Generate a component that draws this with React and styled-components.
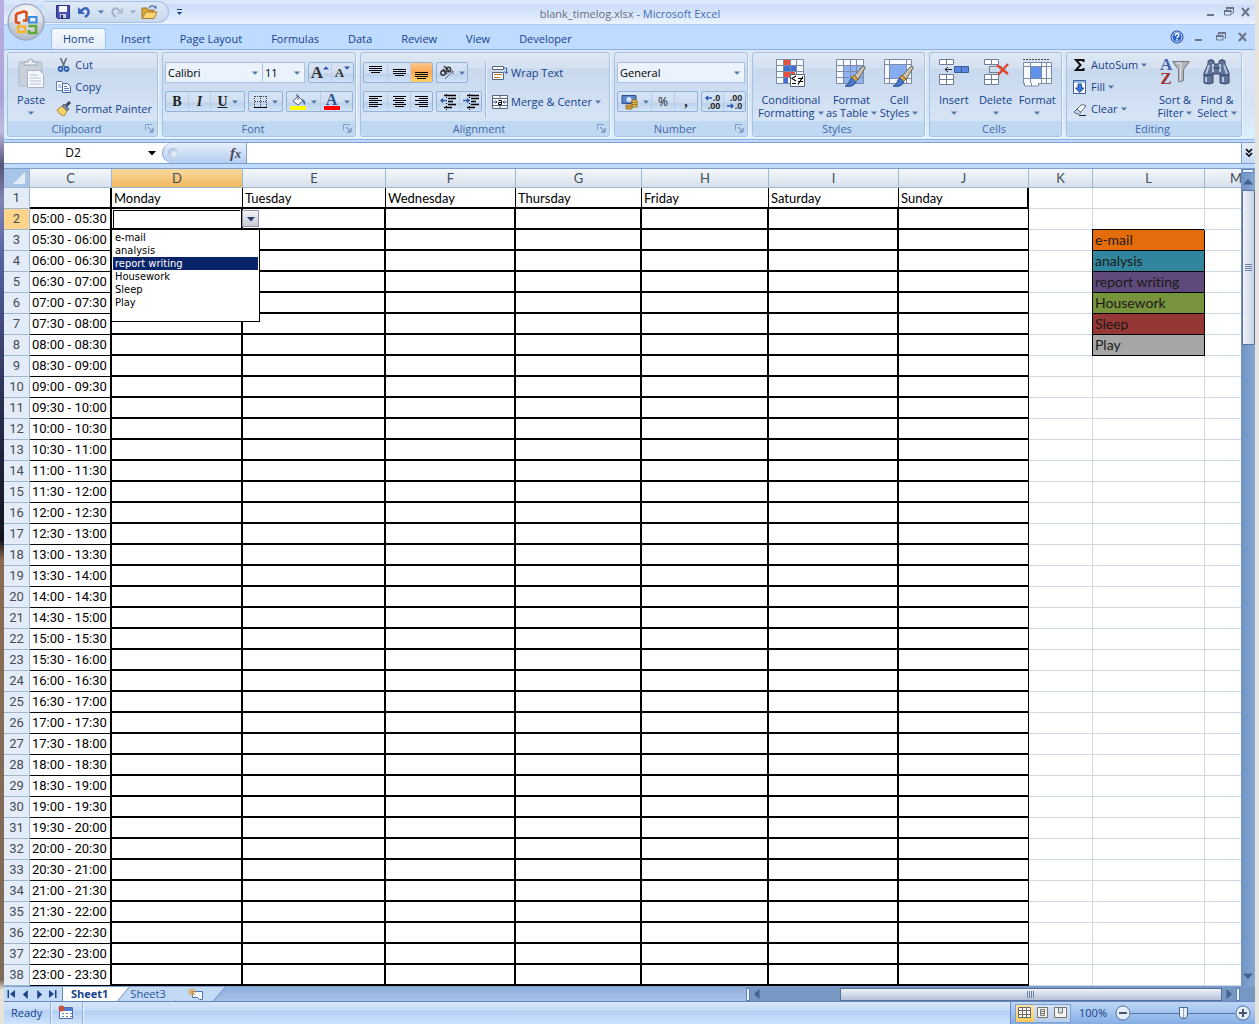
import React, {Fragment, useState} from 'react';
import styled, {createGlobalStyle, css} from 'styled-components';

const uiFont = '"Open Sans", "Noto Sans", sans-serif';
const cellFont = 'Lato, "Open Sans", sans-serif';

const GlobalStyle = createGlobalStyle`
  * {
    box-sizing: border-box;
  }

  body {
    margin: 0;
    font: 11px/14px ${uiFont};
    color: #15428b;
    background: #e6e3da;
  }

  button, input, select {
    margin: 0;
    padding: 0;
    border: 0;
    border-radius: 0;
    color: inherit;
    font: inherit;
    background: none;
  }

  svg {
    display: block;
    flex: none;
  }
`;

const Desktop = styled.div`
  min-height: 100vh;
  padding: 0 4px;
  background: linear-gradient(#b9b0e0 0, #a9a4dc 100px, #c0bce0 130px, #56547c 165px, #7f86b4 200px, #5560a0 260px, #262b48 420px, #12141c 540px, #8a6a52 560px, #7d6a5a 980px, #e6e3da 990px) 0 0 / 4px 100% no-repeat, #e6e3da;
`;

const Window = styled.div`
  position: relative;
  display: flex;
  flex-direction: column;
  min-height: 100vh;
  overflow: hidden;
  background: #bfdbff;
`;

/* title bar */

const TitleBar = styled.header`
  display: flex;
  align-items: center;
  height: 25px;
  border-bottom: 1px solid #b0cdf2;
  background: linear-gradient(#d8e6fa 0, #dbe7fa 4px, #cadcf7 5px, #dfebfd 18px, #e9f2ff 100%);
`;

const QuickAccess = styled.div`
  display: flex;
  align-items: center;
  width: 125px;
  height: 22px;
  margin-left: 40px;
  padding-left: 11px;
  border: 1px solid #a9c1e4;
  border-left: 0;
  border-radius: 0 11px 11px 0;
  background: linear-gradient(#dfe9f7, #c8d8ee);
`;

const IconButton = styled.button`
  display: flex;
  align-items: center;
  justify-content: center;
  width: ${props => props.$width || 16}px;
  height: 18px;
`;

const Title = styled.h1`
  flex: 1;
  margin: 0;
  padding: 3px 132px 0 0;
  color: #3e6db5;
  font-size: 11px;
  font-weight: 400;
  text-align: center;

  span {
    color: #696b7c;
  }
`;

const WindowButtons = styled.div`
  display: flex;
  align-items: center;
  align-self: center;
  margin-left: auto;
  padding-right: 1px;
`;

const OfficeButton = styled.button`
  position: absolute;
  top: 3px;
  left: 3px;
  z-index: 2;
  width: 38px;
  height: 38px;
`;

/* ribbon */

const Tabs = styled.nav`
  display: flex;
  align-items: flex-end;
  gap: 1px;
  height: 24px;
  padding-left: 47px;
`;

const Tab = styled.button`
  height: 21px;
  padding: 0 13px;
  border: 1px solid transparent;
  border-bottom: 0;
  border-radius: 3px 3px 0 0;
  ${props => props.$active && css`
    padding: 0 11px;
    border-color: #9dbfe9;
    background: linear-gradient(#f4f9ff, #e3edf9);
  `}
`;

const Ribbon = styled.div`
  display: flex;
  gap: 4px;
  height: 91px;
  padding: 2px 3px;
  border: 1px solid #8db2e3;
  border-width: 1px 0;
  border-radius: 3px;
  background: linear-gradient(#dde7f4, #d4e3f5 60%, #dcf0ff);
`;

const Group = styled.section`
  display: flex;
  flex-direction: column;
  flex: none;
  width: ${props => props.$width}px;
  border: 1px solid #a6c1e2;
  border-radius: 3px;
  box-shadow: 1px 1px 0 #f0f7ff;
  background: linear-gradient(#dee8f5 0, #d4e0f0 15px, #c8d8ed 16px, #dae8f8 100%);
  overflow: hidden;
`;

const GroupBody = styled.div`
  display: flex;
  flex: 1;
  gap: ${props => props.$gap || 0}px;
  padding: ${props => props.$pad || '1px 3px'};
`;

const GroupLabel = styled.footer`
  display: flex;
  align-items: center;
  height: 15px;
  padding-right: 3px;
  color: #3e6aaa;
  background: #c1d8f2;

  span {
    flex: 1;
    text-align: center;
  }
`;

const Lines = styled.div`
  display: flex;
  flex-direction: column;
  gap: ${props => props.$gap || 0}px;
`;

const Line = styled.div`
  display: flex;
  gap: 3px;
`;

const SmallButton = styled.button`
  display: flex;
  align-items: center;
  gap: 3px;
  height: 22px;
  padding: 0 2px;
  white-space: nowrap;
`;

const BigButton = styled.button`
  display: flex;
  flex-direction: column;
  align-items: center;
  width: ${props => props.$width}px;
  padding-top: 4px;
  line-height: 13px;
  white-space: nowrap;
`;

const Art = styled.span`
  display: flex;
  height: 35px;
`;

const Caption = styled.span`
  display: flex;
  align-items: center;
  justify-content: center;
  gap: 3px;
  min-height: 13px;
`;

const ButtonSet = styled.div`
  display: flex;
  height: 21px;
  border: 1px solid #95b1d8;
  border-radius: 2px;
  background: linear-gradient(#d7e4f4 0, #cfdef1 10px, #bed1ec 11px, #d1e3f8 100%);

  button + button {
    border-left: 1px solid #b7cce8;
  }
`;

const Tool = styled.button`
  display: flex;
  align-items: center;
  justify-content: center;
  gap: 4px;
  width: ${props => props.$width || 22}px;
  color: #222;
  font-size: 12px;
  ${props => props.$pressed && css`
    background: linear-gradient(#fbc68a 0, #f9a850 9px, #ffd26b 100%);
  `}
`;

const Glyph = styled.span`
  font: ${props => props.$style || 'bold'} 14px/16px "Liberation Serif", serif;
  text-decoration: ${props => (props.$underline ? 'underline' : 'none')};
`;

const SelectBox = styled.div`
  display: flex;
  align-items: center;
  width: ${props => props.$width}px;
  height: 21px;
  margin-right: ${props => (props.$joined ? -4 : 0)}px;
  padding-right: 4px;
  border: 1px solid #abc1de;
  background: #eaf2fb;

  select {
    flex: 1;
    min-width: 0;
    padding-left: 2px;
    appearance: none;
    color: #000;
  }
`;

const Divider = styled.div`
  width: 1px;
  height: 56px;
  margin: 0 4px 0 3px;
  background: #9db9dd;
  box-shadow: 1px 0 0 #eaf3fd;
`;

/* formula bar */

const FormulaBar = styled.div`
  display: flex;
  height: 22px;
  margin-top: 2px;
  border: 1px solid #7c9fcf;
  border-width: 1px 0;
  font-size: 12px;
  background: #fff;
`;

const NameBox = styled.div`
  display: flex;
  align-items: center;
  width: 158px;
  color: #000;

  input {
    flex: 1;
    min-width: 0;
    text-align: center;
  }
`;

const FunctionBox = styled.div`
  display: flex;
  align-items: center;
  justify-content: space-between;
  width: 85px;
  padding: 0 5px;
  border: 1px solid #7c9fcf;
  border-width: 0 1px;
  border-radius: 10px 0 0 10px;
  background: linear-gradient(#e6effb, #b4cdf0);

  button {
    color: #444b58;
    font: italic bold 15px/16px "Liberation Serif", serif;
  }

  small {
    font-size: 12px;
  }
`;

const Knob = styled.i`
  width: 10px;
  height: 10px;
  border-radius: 50%;
  background: radial-gradient(circle at 60% 60%, #f4f7fc, #8fa9d2);
`;

const FormulaInput = styled.input`
  flex: 1;
  min-width: 0;
  padding: 0 4px;
  color: #000;
`;

const Expand = styled.button`
  display: flex;
  align-items: center;
  justify-content: center;
  width: 14px;
  border-left: 1px solid #7c9fcf;
  background: linear-gradient(#e6effb, #c3d8f5);
`;

/* sheet */

const Workspace = styled.main`
  display: flex;
  flex: 1;
  margin-top: 4px;
  border-top: 1px solid #7c9fcf;
`;

const SheetArea = styled.div`
  flex: 1;
  min-width: 0;
  overflow: hidden;
  background: #fff;
`;

const Sheet = styled.table`
  width: 100%;
  min-width: 1264px;
  table-layout: fixed;
  border-spacing: 0;
  color: #000;
  font: 13px/18px ${cellFont};
`;

const ColumnHead = styled.th`
  height: 19px;
  padding: 0;
  border: solid #9eb6ce;
  border-width: 0 1px 1px 0;
  color: #444d58;
  font-weight: 400;
  background: ${props => (props.$active ? 'linear-gradient(#f9d99f, #f0b95f)' : 'linear-gradient(#f5f8fc, #d6e0ec)')};
`;

const Corner = styled.th`
  padding: 1px 4px 1px 0;
  border: 1px solid #9eb6ce;
  border-width: 0 1px 1px 0;
  background: #a9c4e9;

  svg {
    margin-left: auto;
  }
`;

const RowHead = styled.th`
  height: 21px;
  padding: 0;
  border: solid #9eb6ce;
  border-width: 0 1px 1px 0;
  color: #444d58;
  font: 13px/18px Roboto, sans-serif;
  background: ${props => (props.$active ? '#ffd58d' : '#e4ecf7')};
`;

const Cell = styled.td`
  position: relative;
  height: 21px;
  padding: 0 2px;
  border: solid #d0d7e5;
  border-width: 0 1px 1px 0;
  white-space: nowrap;
`;

const LogCell = styled(Cell)`
  padding-top: 1px;
  border-color: #000;
  border-width: 0 ${props => props.$right}px 2px 0;
`;

const HourCell = styled(Cell)`
  border-color: #000;
  border-width: 0 2px 1px 0;
  font-family: Roboto, sans-serif;
`;

const LegendCell = styled(Cell)`
  border-color: #000;
  box-shadow: -1px 0 0 #000, -1px -1px 0 #000;
  color: #1a1a1a;
  font-size: 14px;
  font-variant-ligatures: none;
  background: ${props => props.$color};
`;

const CellCursor = styled.div`
  height: 18px;
  margin: -1px -1px 0 -1px;
  border: 1px solid #000;
  border-width: 1px 0 0 1px;
`;

const Picker = styled.button`
  position: absolute;
  top: 1px;
  left: 100%;
  z-index: 2;
  display: flex;
  align-items: center;
  justify-content: center;
  width: 17px;
  height: 17px;
  margin-left: 1px;
  border: 1px solid #8f96a8;
  color: #2c3f73;
  background: linear-gradient(#f0f1f4, #c9ccd6);
`;

const Options = styled.ul`
  position: absolute;
  top: 20px;
  left: -1px;
  z-index: 3;
  width: 149px;
  height: 93px;
  margin: 0;
  padding: 1px;
  border: 1px solid #000;
  list-style: none;
  font: 11px/13px "DejaVu Sans Condensed", "Noto Sans", sans-serif;
  background: #fff;
`;

const Option = styled.li`
  padding-left: 2px;
  color: ${props => (props.$active ? '#fff' : '#000')};
  background: ${props => (props.$active ? '#0a246a' : 'none')};
`;

/* scroll bars */

const VerticalScroll = styled.div`
  display: flex;
  flex-direction: column;
  align-items: center;
  width: 14px;
  padding-bottom: 3px;
  color: #42608f;
  background: linear-gradient(90deg, #6f93c4, #86a7d3);
`;

const Splitter = styled.div`
  flex: none;
  width: ${props => (props.$vertical ? 4 : 12)}px;
  height: ${props => (props.$vertical ? 13 : 4)}px;
  border: 1px solid #5f83b8;
  background: #e8f2ff;
`;

const VerticalThumb = styled.div`
  display: flex;
  align-items: center;
  justify-content: center;
  width: 13px;
  height: 19%;
  border: 1px solid #58719c;
  border-radius: 1px;
  background: linear-gradient(90deg, #f0f4fa, #c5d1e3);
`;

const Spacer = styled.div`
  flex: 1;
`;

const BottomBar = styled.div`
  display: flex;
  height: 16px;
  border-top: 1px solid #7c9fcf;
  border-bottom: 1px solid #6487c0;
  background: linear-gradient(#8fb0dc, #a6c2e8);
`;

const SheetTabs = styled.div`
  display: flex;
  flex: 6;
  min-width: 0;
`;

const SheetNav = styled.div`
  display: flex;
  align-items: center;
  width: 59px;
  border-right: 1px solid #6487c0;
  color: #1f4187;
  background: #c5dcf9;
`;

const SheetTab = styled.button`
  position: relative;
  z-index: ${props => (props.$active ? 2 : 1)};
  display: flex;
  align-items: center;
  height: 14px;
  padding: 0 10px 0 ${props => (props.$active ? 8 : 12)}px;
  color: ${props => (props.$active ? '#15428b' : '#2a5494')};
  font-weight: ${props => (props.$active ? 700 : 400)};
  background: ${props => (props.$active ? '#fff' : '#c3daf7')};

  &::after {
    content: '';
    position: absolute;
    top: 0;
    right: -6px;
    z-index: -1;
    width: 14px;
    height: 14px;
    border-right: 1px solid #5d80b8;
    background: inherit;
    transform: skewX(-40deg);
  }
`;

const HorizontalScroll = styled.div`
  display: flex;
  align-items: center;
  flex: 4;
  min-width: 0;
  padding-right: 15px;
  color: #42608f;
  background: #7898c4;
`;

const HorizontalThumb = styled.div`
  display: flex;
  align-items: center;
  justify-content: center;
  flex: 5;
  height: 13px;
  border: 1px solid #58719c;
  background: linear-gradient(#eef2f8, #b4c2d8);
`;

const ScrollArrow = styled.button`
  display: flex;
  align-items: center;
  justify-content: center;
  width: 14px;
  height: ${props => props.$height || 14}px;
`;

/* status bar */

const StatusBar = styled.footer`
  display: flex;
  align-items: stretch;
  height: 22px;
  background: linear-gradient(#d7e6f9 0, #c7dcf8 8px, #b3d0f5 9px, #cfe3fd 100%);
`;

const StatusItem = styled.div`
  display: flex;
  align-items: center;
  padding: 0 8px 0 7px;
  border-right: 1px solid #8fb1df;
  box-shadow: 1px 0 0 #e8f3ff;
`;

const StatusTools = styled.div`
  display: flex;
  align-items: center;
  width: 245px;
  padding: 0 4px;
  border-left: 1px solid #5f8bc6;
  background: linear-gradient(#bed6f6, #85aee4);
`;

const Views = styled.div`
  display: flex;
  height: 19px;
  border: 1px solid #7f9fce;
`;

const ViewButton = styled.button`
  display: flex;
  align-items: center;
  justify-content: center;
  width: 18px;
  background: ${props => (props.$active ? 'linear-gradient(#fde5b0, #fdc95c)' : 'linear-gradient(#d5e3f5, #b6cdec)')};
`;

const ZoomLevel = styled.button`
  width: 44px;
`;

const ZoomSlider = styled.input`
  flex: 1;
  min-width: 0;
  height: 16px;
  appearance: none;
  background: linear-gradient(#4e74ad, #4e74ad) center / 100% 1px no-repeat;

  &::-webkit-slider-thumb {
    width: 9px;
    height: 12px;
    border: 1px solid #4a6690;
    border-radius: 1px 1px 5px 5px;
    appearance: none;
    background: linear-gradient(90deg, #f5f9ff 42%, #8aa2c8 43%, #8aa2c8 57%, #e2ecfa 58%);
  }
`;

/* icons */

const Arrow = ({size = 5, dir = 'down', color = 'currentColor'}) => {
  const angle = {down: 0, left: 90, up: 180, right: 270}[dir];
  return (
    <svg width={size + 1} height={size + 1} viewBox="0 0 6 6" fill={color} aria-hidden="true">
      <path d="M0 1.5h6L3 4.8z" transform={`rotate(${angle} 3 3)`}/>
    </svg>
  );
};

const Drop = () => <Arrow color="#5577a8"/>;

const Svg = ({w = 16, h = 16, children}) => (
  <svg width={w} height={h} viewBox={`0 0 ${w} ${h}`} fill="none" aria-hidden="true">{children}</svg>
);

const OfficeIcon = () => (
  <Svg w={38} h={38}>
    <defs>
      <radialGradient id="orb" cx=".5" cy=".3" r=".75">
        <stop offset="0" stopColor="#fff"/>
        <stop offset=".6" stopColor="#dcdfe8"/>
        <stop offset="1" stopColor="#9aa6bf"/>
      </radialGradient>
    </defs>
    <circle cx="19" cy="19" r="18" fill="url(#orb)" stroke="#8493b1"/>
    <path d="M1.500 20a17.500 17.500 0 0 0 35 0q-17-5-35 0z" fill="#b9c0d0" opacity=".4"/>
    <path d="m9 11 8-2.500 2.500 1v8H16M9 11v8l4 1.500" stroke="#dd4f1c" strokeWidth="2.600"/>
    <path d="M22 14h7.500v5.500H22z" stroke="#3b8fdc" strokeWidth="2.200"/>
    <path d="M11 23.500h7V29h-7z" stroke="#f5b52b" strokeWidth="2.400"/>
    <path d="M21.500 23h7.500v7h-7v-3" stroke="#62a836" strokeWidth="2.600"/>
  </Svg>
);

const SaveIcon = () => (
  <Svg w={14} h={14}>
    <path d="M.5.5h13v13h-12l-1-1z" fill="#4a50b8" stroke="#2c2f86"/>
    <path d="M3 1h8v6H3z" fill="#f4f7ff"/>
    <path d="M4 9h6v4H4z" fill="#c9cfe6"/>
    <path d="M5 10h2v3H5z" fill="#22255f"/>
  </Svg>
);

const UndoIcon = () => (
  <Svg w={14} h={14}>
    <path d="M4 6q5-5 7-1t-3 7" stroke="#3b66b8" strokeWidth="2.500"/>
    <path d="M1 2v7h7z" fill="#3b66b8"/>
  </Svg>
);

const RedoIcon = () => (
  <Svg w={14} h={14}>
    <path d="M10 6Q5 1 3 5t3 7" stroke="#a3b1c9" strokeWidth="2"/>
    <path d="M13 2v7H6z" fill="#b4c0d4"/>
  </Svg>
);

const OpenIcon = () => (
  <Svg w={17}>
    <path d="M1 14V4h5l1 2h6v8z" fill="#e0a93a" stroke="#9b742a"/>
    <path d="M1 14.500 5 8h11l-3 6.500z" fill="#fbd673" stroke="#a87f2f"/>
    <path d="M8 4q3-4 6-1" stroke="#5b7db8" strokeWidth="1.500"/>
    <path d="m15.500 1 .3 4-3.500-1z" fill="#5b7db8"/>
  </Svg>
);

const CustomizeIcon = () => (
  <Svg w={7} h={8}><path d="M1 1.500h5" stroke="#15428b"/><path d="M1 4h5L3.500 7z" fill="#15428b"/></Svg>
);

const WindowIcon = ({kind}) => (
  <Svg w={12} h={12}>
    {kind === 'min' && <path d="M2 9h7" stroke="#6a7589" strokeWidth="2"/>}
    {kind === 'max' && (
      <Fragment>
        <path d="M3.500 4V2.500h7V7H9M1.500 5.500H8V9H1.500z" stroke="#6a7589"/>
        <path d="M3 2h8M1 5h7.500" stroke="#6a7589" strokeWidth="2"/>
      </Fragment>
    )}
    {kind === 'close' && <path d="m2 2 7 8m0-8-7 8" stroke="#6a7589" strokeWidth="2"/>}
  </Svg>
);

const HelpIcon = () => (
  <Svg w={14} h={14}>
    <circle cx="7" cy="7" r="6" fill="#2c63d2" stroke="#1c4090"/>
    <circle cx="7" cy="7" r="5" stroke="#cfe0ff"/>
    <path d="M5.200 5.800q0-2 1.900-2t1.700 1.600q0 .9-1.700 2v.8M7 9v1.500" stroke="#fff" strokeWidth="1.400"/>
  </Svg>
);

const PasteIcon = () => (
  <Svg w={30} h={32}>
    <rect x="3" y="4" width="23" height="24" rx="1" fill="#c9d0da" stroke="#aeb8c6"/>
    <path d="M8 6V4h4q0-3 2.500-3T17 4h4v3H8z" fill="#e9edf3" stroke="#98a4b5"/>
    <path d="M11.500 12.500h12l4 4v13h-16z" fill="#f5f8fc" stroke="#aab6c8"/>
    <path d="M14 17h8m-8 3h11m-11 3h11m-11 3h11" stroke="#b5c2d5"/>
  </Svg>
);

const CutIcon = () => (
  <Svg>
    <path d="m4.500 1 4 9m2-9-4 9" stroke="#5f6b80" strokeWidth="1.600"/>
    <circle cx="4.500" cy="12" r="2" stroke="#2f5fae" strokeWidth="1.800"/>
    <circle cx="10.500" cy="12" r="2" stroke="#2f5fae" strokeWidth="1.800"/>
  </Svg>
);

const CopyIcon = () => (
  <Svg>
    <path d="M.5 2.500h5l3 3v6h-8z" fill="#fff" stroke="#5d7fb8"/>
    <path d="M2 6h3M2 8h4" stroke="#7f9fd0"/>
    <path d="M6.500 4.500h5l3 3v6h-8z" fill="#fff" stroke="#3e64a8"/>
    <path d="M8 7.500h3m-3 2h5m-5 2h5" stroke="#5a80c0"/>
  </Svg>
);

const PainterIcon = () => (
  <Svg>
    <path d="m1 9 5-4 5 5-3 5q-5-1-7-6z" fill="#f7d36b" stroke="#a98a3b"/>
    <path d="m6 5 2-2 5 5-2 2z" fill="#8c93a4" stroke="#59606f"/>
    <path d="m10 5 4-4" stroke="#3e4c68" strokeWidth="3"/>
  </Svg>
);

const LauncherIcon = () => (
  <Svg w={9} h={9}>
    <path d="M.5 6V.5H7" stroke="#7f9cc8"/>
    <path d="m3 3 4 4M8 4v4H4" stroke="#5a7db0"/>
  </Svg>
);

const BorderIcon = () => (
  <Svg w={14} h={14}>
    <path d="M.5 1v11M6.500 1v11M12.500 1v11M1 1.500h12M1 6.500h12" stroke="#444" strokeDasharray="1 1"/>
    <path d="M0 12.500h13" stroke="#000"/>
  </Svg>
);

const FillColorIcon = () => (
  <Svg w={17}>
    <path d="m3 7 5-5 5 5-5 4z" fill="#f3f6fb" stroke="#4d5e7d"/>
    <path d="M8 6V1H6" stroke="#4d5e7d"/>
    <path d="M12 5q4 1 3 6-2-1-2-4z" fill="#3e6db5"/>
    <path d="M0 12h16v4H0z" fill="#ff0"/>
  </Svg>
);

const ColorA = styled.span`
  display: block;
  width: 16px;
  height: 16px;
  border-bottom: 4px solid #f00;
  color: #2d5391;
  font: bold 16px/12px "Liberation Serif", serif;
  text-align: center;
`;

const SizeA = styled.span`
  display: flex;
  color: #333;
  font: bold ${props => props.$size}px/16px "Liberation Serif", serif;
`;

const LinesIcon = ({rows}) => (
  <Svg w={15} h={14}>
    {rows.map(([x, y, w]) => <path key={y} d={`M${x} ${y + 0.5}h${w}`} stroke="#000"/>)}
  </Svg>
);

const alignRows = {
  top: [[1, 0, 13], [1, 2, 13], [1, 4, 13], [3, 6, 9]],
  middle: [[1, 3, 13], [1, 5, 13], [1, 7, 13], [3, 9, 9]],
  bottom: [[1, 6, 13], [1, 8, 13], [1, 10, 13], [3, 12, 9]],
  left: [[1, 1, 13], [1, 3, 9], [1, 5, 13], [1, 7, 9], [1, 9, 13], [1, 11, 9]],
  center: [[1, 1, 13], [3, 3, 9], [1, 5, 13], [3, 7, 9], [1, 9, 13], [3, 11, 9]],
  right: [[1, 1, 13], [5, 3, 9], [1, 5, 13], [5, 7, 9], [1, 9, 13], [5, 11, 9]],
};

const OrientationIcon = () => (
  <Svg>
    <circle cx="4" cy="8" r="2.200" stroke="#333" strokeWidth="1.400"/>
    <path d="m4 4 4 5M5 1l6 6" stroke="#333" strokeWidth="1.400"/>
    <circle cx="9.500" cy="4.500" r="2.200" stroke="#333" strokeWidth="1.400"/>
    <path d="m6 14 8-8m-3 0h3v3" stroke="#5b6a82"/>
  </Svg>
);

const IndentIcon = ({back}) => (
  <Svg>
    <path d="M4 1.500h12M8 4.500h8M8 7.500h5M8 10.500h8M4 13.500h8" stroke="#000" strokeWidth="1.600"/>
    <path d="M6.500 0v16" stroke="#000" strokeDasharray="1 2"/>
    <path d={back ? 'M7 6.500H1m2-2-2 2 2 2' : 'M0 6.500h6m-2-2 2 2-2 2'} stroke="#2c5ab0" strokeWidth="1.500"/>
  </Svg>
);

const WrapIcon = () => (
  <Svg>
    <path d="M.5 1.500h11v3H.5zM.5 7.500h11v7H.5z" fill="#fff" stroke="#56657f"/>
    <path d="M2 9.500h8m-8 3h6" stroke="#c27b2c"/>
    <path d="M12 3h2.500v5M12 6.500l2.500 2 1.500-2" stroke="#3e64a8"/>
  </Svg>
);

const MergeIcon = () => (
  <Svg>
    <path d="M.5 1.500h15v13H.5zM8 2v3m0 6v3M0 4.500h15M0 11.500h15" fill="#fff" stroke="#56657f"/>
    <path d="M1 8h4m6 0h4M3.500 6.500 5 8 3.500 9.500m9-3L11 8l1.500 1.500" stroke="#2c4a86"/>
    <path d="M6.500 6.500h3v4h-3v-2h3" stroke="#000"/>
  </Svg>
);

const CurrencyIcon = () => (
  <Svg w={18}>
    <path d="M1 1.500h14v8H1z" fill="#5d86c8" stroke="#2f4f8c"/>
    <circle cx="8" cy="5.500" r="2.500" fill="#dbe7f8"/>
    <path d="M11 6h5v7h-5z" fill="#f4c74e" stroke="#9a7424"/>
    <path d="M5 11h6v4H5z" fill="#e9b83c" stroke="#9a7424"/>
    <path d="M11 8.500h5m-5 2h5M5 13h6" stroke="#9a7424"/>
  </Svg>
);

const Decimal = styled.span`
  display: grid;
  justify-items: end;
  color: #222;
  font: bold 9px/8px "Liberation Sans", sans-serif;

  span {
    display: flex;
    align-items: center;
    gap: 1px;
  }
`;

const DecimalArrow = ({back}) => (
  <Svg w={7} h={6}>
    <path d={back ? 'M7 3H1m2-2L1 3l2 2' : 'M0 3h6M4 1l2 2-2 2'} stroke="#2c5ab0" strokeWidth="1.500"/>
  </Svg>
);

const Grid = ({frame, children}) => (
  <Fragment>
    <path d="M1.500 1.500h27v24h-27z" fill="#f7faff"/>
    {children}
    <path
      d={frame ? 'M1.500 1.500h27v24h-27zM6.500 1v24m17-24v24M1 6.500h27M1 20.500h27' : 'M1.500 1.500h27v24h-27zM8.500 1v24m7-24v24m6-24v24M1 7.500h27M1 13.500h27M1 19.500h27'}
      stroke="#7c8ba8"
    />
  </Fragment>
);

const Brush = () => (
  <Fragment>
    <path d="m19 18 8-9q3-2 3 1l-7 12z" fill="#c9c2b2" stroke="#6a6458"/>
    <path d="m16 20 3-3 4 4-3 3z" fill="#d4a24a" stroke="#7f5d22"/>
    <path d="M10 28q4-1 5-6l2-2 4 4q-3 6-11 4z" fill="#4a78c4" stroke="#2e5496"/>
  </Fragment>
);

const CondIcon = () => (
  <Svg w={32} h={30}>
    <Grid>
      <path d="M8 1h7v6H8z" fill="#ea4f3c"/>
      <path d="M8 7h13v6H8z" fill="#3f6fd0"/>
      <path d="M8 13h12v6H8z" fill="#ea4f3c"/>
      <path d="M8 19h5v6H8z" fill="#3f6fd0"/>
    </Grid>
    <path d="M15.500 16.500h14v12h-14z" fill="#fff" stroke="#5c6678"/>
    <path d="m21 18-4 2.500 4 2.500m-4 2.500h4M23 20.500h5M23 23.500h5m-5 3 5-8" stroke="#000" strokeWidth="1.200"/>
  </Svg>
);

const TableFormatIcon = () => (
  <Svg w={32} h={30}>
    <Grid><path d="M8 7h20v18H8z" fill="#8fb2f0"/></Grid>
    <Brush/>
  </Svg>
);

const CellStylesIcon = () => (
  <Svg w={32} h={30}>
    <Grid frame><path d="M6 6h18v14H6z" fill="#86acf2"/></Grid>
    <Brush/>
  </Svg>
);

const InsertIcon = () => (
  <Svg w={32} h={30}>
    <path d="M1.500 1.500h14v5h-14zM8.500 1v5M1.500 16.500h14v10h-14zM8.500 16v10M1 21.500h14" fill="#fff" stroke="#707d96"/>
    <path d="M16.500 8.500h14v6h-14zM23.500 8v6" fill="#5a88e0" stroke="#3a5a9a"/>
    <path d="M14 11.500H7m3-2.500-3 2.500 3 2.500" stroke="#222"/>
  </Svg>
);

const DeleteIcon = () => (
  <Svg w={32} h={30}>
    <path d="M4.500 1.500h14v5h-14zM11.500 1v5M4.500 16.500h14v10h-14zM11.500 16v10M4 21.500h14" fill="#fff" stroke="#707d96"/>
    <path d="M9.500 8.500h12v6h-12z" stroke="#222" strokeDasharray="1 1"/>
    <path d="m17 7 11 9m0-10L18 17" stroke="#e2452f" strokeWidth="2.400"/>
  </Svg>
);

const FormatIcon = () => (
  <Svg w={32} h={30}>
    <path d="M2 1.500h26" stroke="#444" strokeDasharray="2 1"/>
    <path d="M2.500 4.500h28v21h-28z" fill="#f7faff"/>
    <path d="M10 9h10v11H10z" fill="#5f90ec"/>
    <path d="M2.500 4.500h28v21h-28zM9.500 4v21m11-21v21m5-21v21M2 8.500h28M2 20.500h28" stroke="#7c8ba8"/>
    <path d="M3.500 25v3h14v-3M10.500 25v3" fill="#fff" stroke="#7c8ba8"/>
  </Svg>
);

const SigmaIcon = () => (
  <Svg><path d="M11.500 5V3H4l4.500 5L4 13h7.500v-2" stroke="#111" strokeWidth="2"/></Svg>
);

const FillIcon = () => (
  <Svg>
    <path d="M1.500 1.500h12v13h-12z" fill="#fff" stroke="#3e5e9a"/>
    <path d="M2 2h11v2H2z" fill="#9dbbe8"/>
    <path d="M6 5h3.500v4H12l-4.300 4.500L3.500 9H6z" fill="#3f78dc" stroke="#2450a0"/>
  </Svg>
);

const EraserIcon = () => (
  <Svg>
    <path d="m2 11 7-7q3-1 5 1l-6 7q-3 1-6-1z" fill="#fff" stroke="#59657a"/>
    <path d="m2 11 3-3 4 3.500Q6 15 2 11z" fill="#c7d3e6" stroke="#59657a"/>
    <path d="M7 14.500h7" stroke="#222"/>
  </Svg>
);

const SortLetters = styled.span`
  display: flex;
  flex-direction: column;
  width: 12px;
  color: #a03434;
  font: bold 17px/14px "Liberation Serif", serif;

  b {
    color: #3f62ac;
  }
`;

const FunnelIcon = () => (
  <Svg w={18} h={26}>
    <path d="M.5 3.500h17l-6 8v11l-5 1.500V11.500z" fill="#b0b3b8" stroke="#777b83"/>
    <path d="M4 5h5l-1 18" stroke="#e8eaee"/>
  </Svg>
);

const FindIcon = () => (
  <Svg w={30} h={30}>
    <path d="M6 6V3q3-3 6 0v3h5V3q3-3 6 0v3l4 9v10q-4 2-9 0v-9h-7v9q-5 2-9 0V15z" fill="#5f7397" stroke="#38486a"/>
    <path d="M7 7 4 16m7-10v8m7-8v8m4-7 3 9M4 19v5m17-5v5" stroke="#b9c8e2" strokeWidth="2"/>
    <path d="M2 17h9m7 0h9M11 10h7" stroke="#2c3a58"/>
  </Svg>
);

const ExpandIcon = () => (
  <Svg w={8} h={10}><path d="m1 1 3 3 3-3M1 5l3 3 3-3" stroke="#000" strokeWidth="1.600"/></Svg>
);

const CornerIcon = () => (
  <Svg w={12} h={14}><path d="M12 1v12H0z" fill="#e3edfa"/></Svg>
);

const GripIcon = ({upright}) => (
  <Svg w={9} h={9}>
    <path d={upright ? 'M1.500 1v7m2-7v7m2-7v7m2-7v7' : 'M1 1.500h7m-7 2h7m-7 2h7m-7 2h7'} stroke="#6c7f9e"/>
  </Svg>
);

const EdgeIcon = ({end}) => (
  <Svg w={8} h={8}>
    <path d={end ? 'M0 0v8l5-4zM6 0h1.500v8H6z' : 'M8 0v8L3 4zM.5 0H2v8H.5z'} fill="currentColor"/>
  </Svg>
);

const NewSheetIcon = () => (
  <Svg w={16} h={13}>
    <path d="M4.500 3.500h10v8h-3l-2-2h-5z" fill="#f4f8ff" stroke="#5473a8"/>
    <path d="M4 0v8M0 4h8M1 1l6 6m0-6L1 7" stroke="#e39a2c"/>
  </Svg>
);

const MacroIcon = () => (
  <Svg>
    <path d="M1.500 2.500h13v11h-13z" fill="#fff" stroke="#4a6db0"/>
    <path d="M2 3h12v3H2z" fill="#4d80d0"/>
    <path d="M4 8.500h2m2 0h2m2 0h2m-10 3h2m2 0h2m2 0h2" stroke="#5a80c0"/>
    <circle cx="3.500" cy="3.500" r="3" fill="#c8503c"/>
  </Svg>
);

const ViewIcon = ({kind}) => (
  <Svg w={14} h={12}>
    {kind === 'normal' && <path d="M.5.5h12v10H.5zM4.500 0v10m4-10v10M0 3.500h12M0 7.500h12" fill="#fff" stroke="#6a6a5e"/>}
    {kind === 'layout' && <path d="M1.500.5h10v10h-10zM4.500 2.500h4v6h-4zM5 4.500h3m-3 2h3" fill="#f3f3f0" stroke="#77776f"/>}
    {kind === 'break' && <path d="M.5.5h12v10H.5zM4.500 0v6h4V0" fill="#f3f3f0" stroke="#77776f"/>}
  </Svg>
);

const ZoomIcon = ({plus}) => (
  <Svg>
    <circle cx="8" cy="8" r="7" fill="#e5eefb" stroke="#56719f"/>
    <path d={plus ? 'M4 8h8M8 4v8' : 'M4 8h8'} stroke="#47566f" strokeWidth="2"/>
  </Svg>
);

/* data */

const tabs = ['Home', 'Insert', 'Page Layout', 'Formulas', 'Data', 'Review', 'View', 'Developer'];

const columns = [
  {id: 'C', width: 82},
  {id: 'D', width: 131},
  {id: 'E', width: 143},
  {id: 'F', width: 130},
  {id: 'G', width: 126},
  {id: 'H', width: 127},
  {id: 'I', width: 130},
  {id: 'J', width: 130},
  {id: 'K', width: 64},
  {id: 'L', width: 112},
  {id: 'M'},
];

const days = ['Monday', 'Tuesday', 'Wednesday', 'Thursday', 'Friday', 'Saturday', 'Sunday'];

const activities = [
  {name: 'e-mail', color: '#e46c0a'},
  {name: 'analysis', color: '#31859c'},
  {name: 'report writing', color: '#604a7b'},
  {name: 'Housework', color: '#77933c'},
  {name: 'Sleep', color: '#953735'},
  {name: 'Play', color: '#a6a6a6'},
];

const clock = slot => {
  const hours = String(Math.floor(slot / 2)).padStart(2, '0');
  return `${hours}:${slot % 2 ? '30' : '00'}`;
};

// row 2 starts at 05:00, every row is half an hour
const hours = Array.from({length: 37}, (_, i) => `${clock(i + 10)} - ${clock(i + 11)}`);

/* parts */

const RibbonGroup = ({label, width, pad, gap, launcher, children}) => (
  <Group $width={width}>
    <GroupBody $pad={pad} $gap={gap}>{children}</GroupBody>
    <GroupLabel>
      <span>{label}</span>
      {launcher && <button aria-label={`${label} options`}><LauncherIcon/></button>}
    </GroupLabel>
  </Group>
);

const Select = ({label, value, width, joined}) => (
  <SelectBox $width={width} $joined={joined}>
    <select aria-label={label} defaultValue={value}>
      <option>{value}</option>
    </select>
    <Drop/>
  </SelectBox>
);

const Big = ({icon, first, second, width}) => (
  <BigButton $width={width}>
    <Art>{icon}</Art>
    <Caption>{first}</Caption>
    <Caption>{second}<Drop/></Caption>
  </BigButton>
);

const HomeRibbon = () => (
  <Ribbon>
    <RibbonGroup label="Clipboard" width={151} gap={3} launcher>
      <Big icon={<PasteIcon/>} first="Paste" width={42}/>
      <Lines>
        <SmallButton><CutIcon/>Cut</SmallButton>
        <SmallButton><CopyIcon/>Copy</SmallButton>
        <SmallButton><PainterIcon/>Format Painter</SmallButton>
      </Lines>
    </RibbonGroup>

    <RibbonGroup label="Font" width={194} pad="9px 2px 0" launcher>
      <Lines $gap={8}>
        <Line>
          <Select label="Font" value="Calibri" width={98} joined/>
          <Select label="Font size" value="11" width={43}/>
          <ButtonSet>
            <Tool $width={22} aria-label="Grow font"><SizeA $size={17}>A<Arrow dir="up" color="#2c5ab0"/></SizeA></Tool>
            <Tool $width={22} aria-label="Shrink font"><SizeA $size={13}>A<Arrow color="#2c5ab0"/></SizeA></Tool>
          </ButtonSet>
        </Line>
        <Line>
          <ButtonSet>
            <Tool aria-label="Bold"><Glyph>B</Glyph></Tool>
            <Tool aria-label="Italic"><Glyph $style="italic bold">I</Glyph></Tool>
            <Tool $width={34} aria-label="Underline"><Glyph $underline>U</Glyph><Drop/></Tool>
          </ButtonSet>
          <ButtonSet><Tool $width={33} aria-label="Borders"><BorderIcon/><Drop/></Tool></ButtonSet>
          <ButtonSet>
            <Tool $width={33} aria-label="Fill color"><FillColorIcon/><Drop/></Tool>
            <Tool $width={32} aria-label="Font color"><ColorA>A</ColorA><Drop/></Tool>
          </ButtonSet>
        </Line>
      </Lines>
    </RibbonGroup>

    <RibbonGroup label="Alignment" width={250} pad="9px 2px 0" launcher>
      <Lines $gap={8}>
        <Line>
          <ButtonSet>
            <Tool $width={23} aria-label="Top align"><LinesIcon rows={alignRows.top}/></Tool>
            <Tool $width={23} aria-label="Middle align"><LinesIcon rows={alignRows.middle}/></Tool>
            <Tool $width={22} $pressed aria-label="Bottom align"><LinesIcon rows={alignRows.bottom}/></Tool>
          </ButtonSet>
          <ButtonSet><Tool $width={30} aria-label="Orientation"><OrientationIcon/><Drop/></Tool></ButtonSet>
        </Line>
        <Line>
          <ButtonSet>
            <Tool $width={23} aria-label="Align left"><LinesIcon rows={alignRows.left}/></Tool>
            <Tool $width={23} aria-label="Center"><LinesIcon rows={alignRows.center}/></Tool>
            <Tool $width={22} aria-label="Align right"><LinesIcon rows={alignRows.right}/></Tool>
          </ButtonSet>
          <ButtonSet>
            <Tool aria-label="Decrease indent"><IndentIcon back/></Tool>
            <Tool aria-label="Increase indent"><IndentIcon/></Tool>
          </ButtonSet>
        </Line>
      </Lines>
      <Divider/>
      <Lines $gap={7}>
        <SmallButton><WrapIcon/>Wrap Text</SmallButton>
        <SmallButton><MergeIcon/>Merge &amp; Center <Drop/></SmallButton>
      </Lines>
    </RibbonGroup>

    <RibbonGroup label="Number" width={134} pad="9px 2px 0" launcher>
      <Lines $gap={8}>
        <Select label="Number format" value="General" width={128}/>
        <Line>
          <ButtonSet>
            <Tool $width={33} aria-label="Accounting format"><CurrencyIcon/><Drop/></Tool>
            <Tool $width={23}>%</Tool>
            <Tool $width={23} aria-label="Comma style"><Glyph>,</Glyph></Tool>
          </ButtonSet>
          <ButtonSet>
            <Tool $width={21} aria-label="Increase decimal">
              <Decimal><span><DecimalArrow back/>.0</span><span>.00</span></Decimal>
            </Tool>
            <Tool $width={22} aria-label="Decrease decimal">
              <Decimal><span>.00</span><span><DecimalArrow/>.0</span></Decimal>
            </Tool>
          </ButtonSet>
        </Line>
      </Lines>
    </RibbonGroup>

    <RibbonGroup label="Styles" width={173}>
      <Big icon={<CondIcon/>} first="Conditional" second="Formatting" width={70}/>
      <Big icon={<TableFormatIcon/>} first="Format" second="as Table" width={52}/>
      <Big icon={<CellStylesIcon/>} first="Cell" second="Styles" width={44}/>
    </RibbonGroup>

    <RibbonGroup label="Cells" width={133}>
      <Big icon={<InsertIcon/>} first="Insert" width={42}/>
      <Big icon={<DeleteIcon/>} first="Delete" width={42}/>
      <Big icon={<FormatIcon/>} first="Format" width={42}/>
    </RibbonGroup>

    <RibbonGroup label="Editing" width={176}>
      <Lines>
        <SmallButton><SigmaIcon/>AutoSum <Drop/></SmallButton>
        <SmallButton><FillIcon/>Fill <Drop/></SmallButton>
        <SmallButton><EraserIcon/>Clear <Drop/></SmallButton>
      </Lines>
      <Spacer/>
      <Big
        icon={<Fragment><SortLetters><b>A</b>Z</SortLetters><FunnelIcon/></Fragment>}
        first="Sort &amp;"
        second="Filter"
        width={42}
      />
      <Big icon={<FindIcon/>} first="Find &amp;" second="Select" width={42}/>
    </RibbonGroup>
  </Ribbon>
);

const ActiveCell = () => {
  const [open, setOpen] = useState(true);
  return (
    <LogCell $right={2}>
      <CellCursor/>
      <Picker aria-label="Pick activity" aria-expanded={open} onClick={() => setOpen(!open)}><Arrow size={7}/></Picker>
      {open && (
        <Options role="listbox" aria-label="Activity">
          {activities.map(({name}) => (
            <Option key={name} role="option" aria-selected={name === 'report writing'} $active={name === 'report writing'}>
              {name}
            </Option>
          ))}
        </Options>
      )}
    </LogCell>
  );
};

const Row = ({number, hour}) => {
  const activity = activities[number - 3];
  return (
    <tr>
      <RowHead scope="row" $active={number === 2}>{number}</RowHead>
      <HourCell>{hour}</HourCell>
      {days.map((day, i) => {
        if (number === 2 && i === 0) {
          return <ActiveCell key={day}/>;
        }
        return <LogCell key={day} $right={i === 6 ? 1 : 2}/>;
      })}
      <Cell/>
      {activity ? <LegendCell $color={activity.color}>{activity.name}</LegendCell> : <Cell/>}
      <Cell/>
    </tr>
  );
};

const Timelog = () => (
  <Sheet>
    <colgroup>
      <col style={{width: 26}}/>
      {columns.map(({id, width}) => <col key={id} style={{width}}/>)}
    </colgroup>
    <thead>
      <tr>
        <Corner><CornerIcon/></Corner>
        {columns.map(({id}) => <ColumnHead key={id} scope="col" $active={id === 'D'}>{id}</ColumnHead>)}
      </tr>
    </thead>
    <tbody>
      <tr>
        <RowHead scope="row">1</RowHead>
        <LogCell $right={2}/>
        {days.map((day, i) => <LogCell key={day} $right={i === 6 ? 2 : 1}>{day}</LogCell>)}
        <Cell/>
        <Cell/>
        <Cell/>
      </tr>
      {hours.map((hour, i) => <Row key={hour} number={i + 2} hour={hour}/>)}
    </tbody>
  </Sheet>
);

export default function App() {
  const [zoom, setZoom] = useState(100);
  return (
    <Desktop>
      <GlobalStyle/>
      <Window>
        <OfficeButton aria-label="Office"><OfficeIcon/></OfficeButton>
        <TitleBar>
          <QuickAccess>
            <IconButton aria-label="Save"><SaveIcon/></IconButton>
            <IconButton $width={26} aria-label="Undo"><UndoIcon/></IconButton>
            <IconButton $width={8} aria-label="Undo list"><Drop/></IconButton>
            <IconButton $width={24} aria-label="Redo"><RedoIcon/></IconButton>
            <IconButton $width={8} aria-label="Redo list"><Arrow color="#9aabc6"/></IconButton>
            <IconButton $width={24} aria-label="Open"><OpenIcon/></IconButton>
          </QuickAccess>
          <IconButton $width={20} aria-label="Customize toolbar"><CustomizeIcon/></IconButton>
          <Title><span>blank_timelog.xlsx</span> - Microsoft Excel</Title>
          <WindowButtons>
            <IconButton aria-label="Minimize"><WindowIcon kind="min"/></IconButton>
            <IconButton $width={19} aria-label="Restore"><WindowIcon kind="max"/></IconButton>
            <IconButton aria-label="Close"><WindowIcon kind="close"/></IconButton>
          </WindowButtons>
        </TitleBar>

        <Tabs>
          {tabs.map(tab => <Tab key={tab} $active={tab === 'Home'}>{tab}</Tab>)}
          <WindowButtons>
            <IconButton $width={22} aria-label="Help"><HelpIcon/></IconButton>
            <IconButton $width={22} aria-label="Minimize workbook"><WindowIcon kind="min"/></IconButton>
            <IconButton $width={22} aria-label="Restore workbook"><WindowIcon kind="max"/></IconButton>
            <IconButton $width={22} aria-label="Close workbook"><WindowIcon kind="close"/></IconButton>
          </WindowButtons>
        </Tabs>

        <HomeRibbon/>

        <FormulaBar>
          <NameBox>
            <input aria-label="Name box" defaultValue="D2"/>
            <IconButton $width={20} aria-label="Cell names"><Arrow size={7}/></IconButton>
          </NameBox>
          <FunctionBox>
            <Knob/>
            <button aria-label="Insert function">f<small>x</small></button>
          </FunctionBox>
          <FormulaInput aria-label="Formula"/>
          <Expand aria-label="Expand formula bar"><ExpandIcon/></Expand>
        </FormulaBar>

        <Workspace>
          <SheetArea><Timelog/></SheetArea>
          <VerticalScroll>
            <Splitter/>
            <ScrollArrow $height={17} aria-label="Scroll up"><Arrow size={9} dir="up"/></ScrollArrow>
            <VerticalThumb><GripIcon/></VerticalThumb>
            <Spacer/>
            <ScrollArrow aria-label="Scroll down"><Arrow size={9}/></ScrollArrow>
          </VerticalScroll>
        </Workspace>

        <BottomBar>
          <SheetTabs>
            <SheetNav>
              <ScrollArrow aria-label="First sheet"><EdgeIcon/></ScrollArrow>
              <ScrollArrow aria-label="Previous sheet"><Arrow size={8} dir="left"/></ScrollArrow>
              <ScrollArrow aria-label="Next sheet"><Arrow size={8} dir="right"/></ScrollArrow>
              <ScrollArrow aria-label="Last sheet"><EdgeIcon end/></ScrollArrow>
            </SheetNav>
            <SheetTab $active>Sheet1</SheetTab>
            <SheetTab>Sheet3</SheetTab>
            <SheetTab aria-label="New sheet"><NewSheetIcon/></SheetTab>
          </SheetTabs>
          <HorizontalScroll>
            <Splitter $vertical/>
            <ScrollArrow aria-label="Scroll left"><Arrow size={9} dir="left"/></ScrollArrow>
            <Spacer/>
            <HorizontalThumb><GripIcon upright/></HorizontalThumb>
            <ScrollArrow aria-label="Scroll right"><Arrow size={9} dir="right"/></ScrollArrow>
            <Splitter $vertical/>
          </HorizontalScroll>
        </BottomBar>

        <StatusBar>
          <StatusItem>Ready</StatusItem>
          <StatusItem><button aria-label="Record macro"><MacroIcon/></button></StatusItem>
          <Spacer/>
          <StatusTools>
            <Views>
              <ViewButton $active aria-label="Normal view"><ViewIcon kind="normal"/></ViewButton>
              <ViewButton aria-label="Page layout view"><ViewIcon kind="layout"/></ViewButton>
              <ViewButton aria-label="Page break preview"><ViewIcon kind="break"/></ViewButton>
            </Views>
            <ZoomLevel>{zoom}%</ZoomLevel>
            <button aria-label="Zoom out" onClick={() => setZoom(zoom - 10)}><ZoomIcon/></button>
            <ZoomSlider
              type="range"
              min="10"
              max="190"
              aria-label="Zoom"
              value={zoom}
              onChange={e => setZoom(Number(e.target.value))}
            />
            <button aria-label="Zoom in" onClick={() => setZoom(zoom + 10)}><ZoomIcon plus/></button>
          </StatusTools>
        </StatusBar>
      </Window>
    </Desktop>
  );
}
